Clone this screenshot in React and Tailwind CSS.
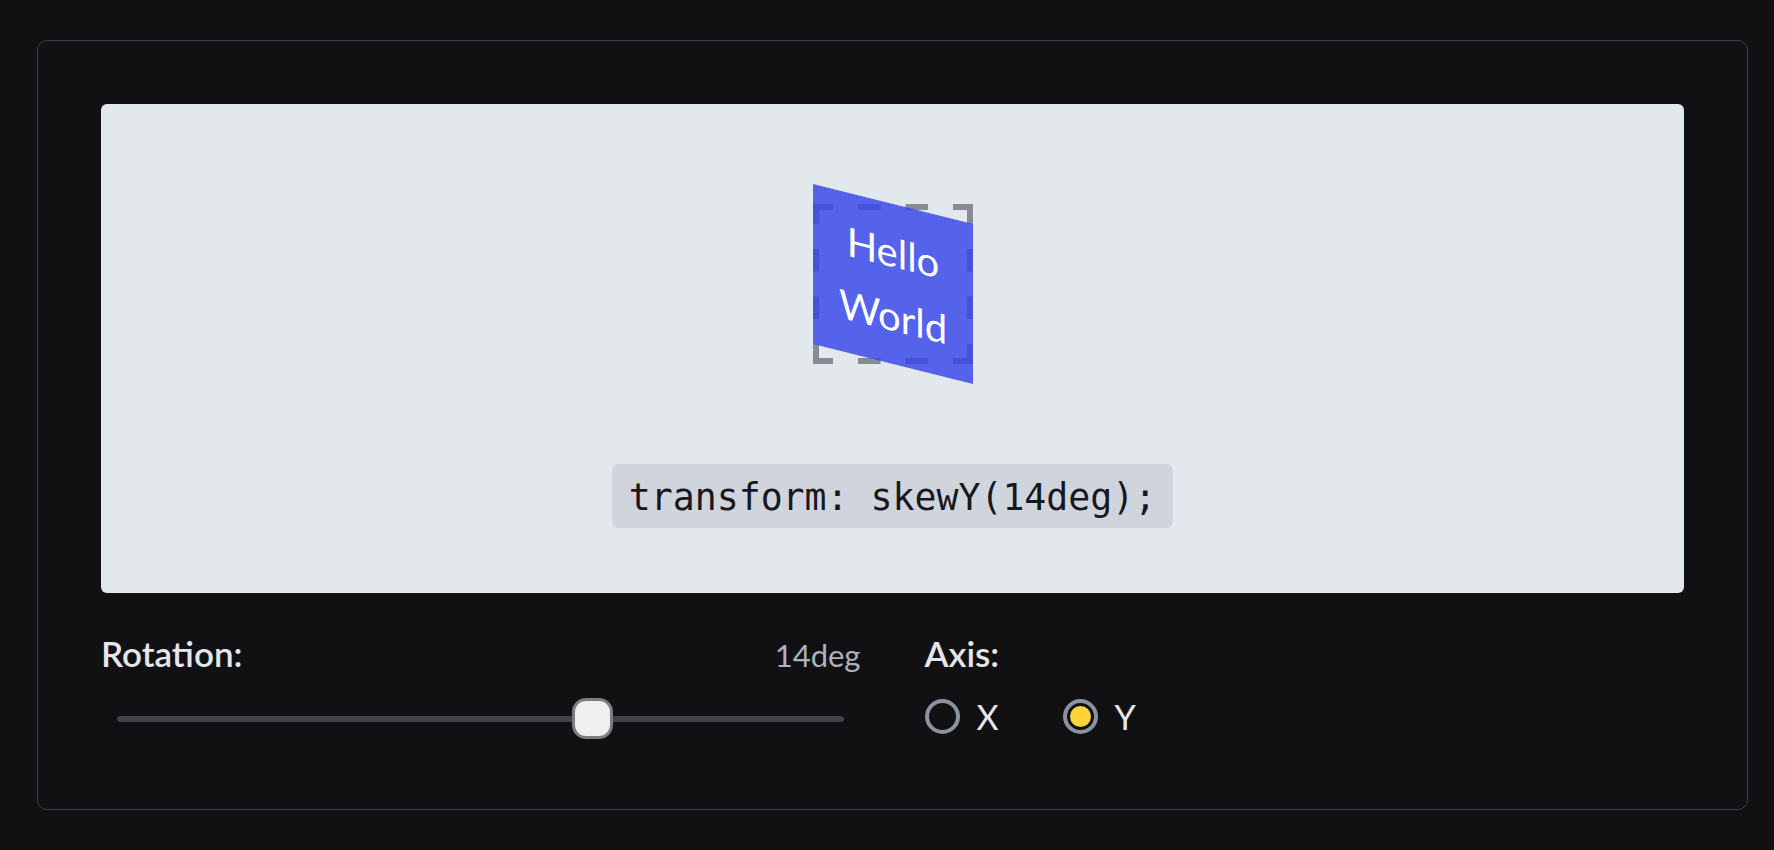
import { useState } from "react";

const sans = { fontFamily: "Lato, 'Noto Sans', sans-serif" };

// dashed outline that marks the box before the transform
function GhostOutline() {
  return (
    <svg className="absolute inset-0" width="160" height="160" viewBox="0 0 160 160">
      <rect
        x="3"
        y="3"
        width="154"
        height="154"
        fill="none"
        stroke="#888b94"
        strokeWidth="6"
        strokeDasharray="34 25 22.5 25 22.5 25"
        strokeDashoffset="17"
      />
    </svg>
  );
}

function Radio({ label, checked, onClick }) {
  return (
    <button className="flex items-center gap-[17px] w-[138px]" onClick={onClick}>
      <span className="w-[35px] h-[35px] rounded-full border-4 border-[#8a939f] flex items-center justify-center">
        {checked && <span className="w-[21px] h-[21px] rounded-full bg-[#fcd53b]" />}
      </span>
      <span className="text-[34px] leading-[41px] text-[#e6e8eb]">{label}</span>
    </button>
  );
}

export default function App() {
  const [axis, setAxis] = useState("Y");
  const value = 14;

  return (
    <div className="min-h-screen bg-[#111113] pt-[40px] pl-[37px]" style={sans}>
      <div className="w-[1711px] border border-[#3d4048] rounded-[10px] px-[63px] pt-[63px] pb-[70px]">
        {/* Preview */}
        <div className="h-[489px] rounded-md bg-[#e3e8ed] flex flex-col items-center pt-[100px]">
          <div className="relative w-[160px] h-[160px]">
            <GhostOutline />
            <div className="absolute inset-0 skew-y-[14deg] bg-[rgba(53,68,233,0.815)] flex flex-col items-center justify-center text-white text-[40px] leading-[64px]">
              <span>Hello</span>
              <span>World</span>
            </div>
          </div>
          <code
            className="mt-[100px] rounded-md bg-[#d0d5dd] px-[17px] pt-[10px] pb-[6px] text-[36.5px] leading-[48px] text-[#16181d]"
            style={{ fontFamily: "'DejaVu Sans Mono', 'Liberation Mono', monospace" }}
          >
            transform: skew{axis}({value}deg);
          </code>
        </div>

        {/* Controls */}
        <div className="grid grid-cols-2 gap-x-16 mt-[40px]">
          <div>
            <div className="flex items-baseline justify-between leading-[41px]">
              <span className="text-[35px] font-semibold text-[#e4e6ea]">Rotation:</span>
              <span className="text-[31px] text-[#a9b3c1]">{value}deg</span>
            </div>
            <div className="relative h-[41px] mt-[22px]">
              <div className="absolute left-4 right-[17px] top-[18px] h-[6px] rounded-full bg-[#3f444c]" />
              <div className="absolute left-[471px] top-0 w-[41px] h-[41px] rounded-[14px] border-[3px] border-[#7d7d7d] bg-[#efefef]" />
            </div>
          </div>
          <div>
            <div className="text-[35px] font-semibold leading-[41px] text-[#e4e6ea]">Axis:</div>
            <div className="flex items-center h-[41px] mt-[22px]">
              <Radio label="X" checked={axis === "X"} onClick={() => setAxis("X")} />
              <Radio label="Y" checked={axis === "Y"} onClick={() => setAxis("Y")} />
            </div>
          </div>
        </div>
      </div>
    </div>
  );
}
